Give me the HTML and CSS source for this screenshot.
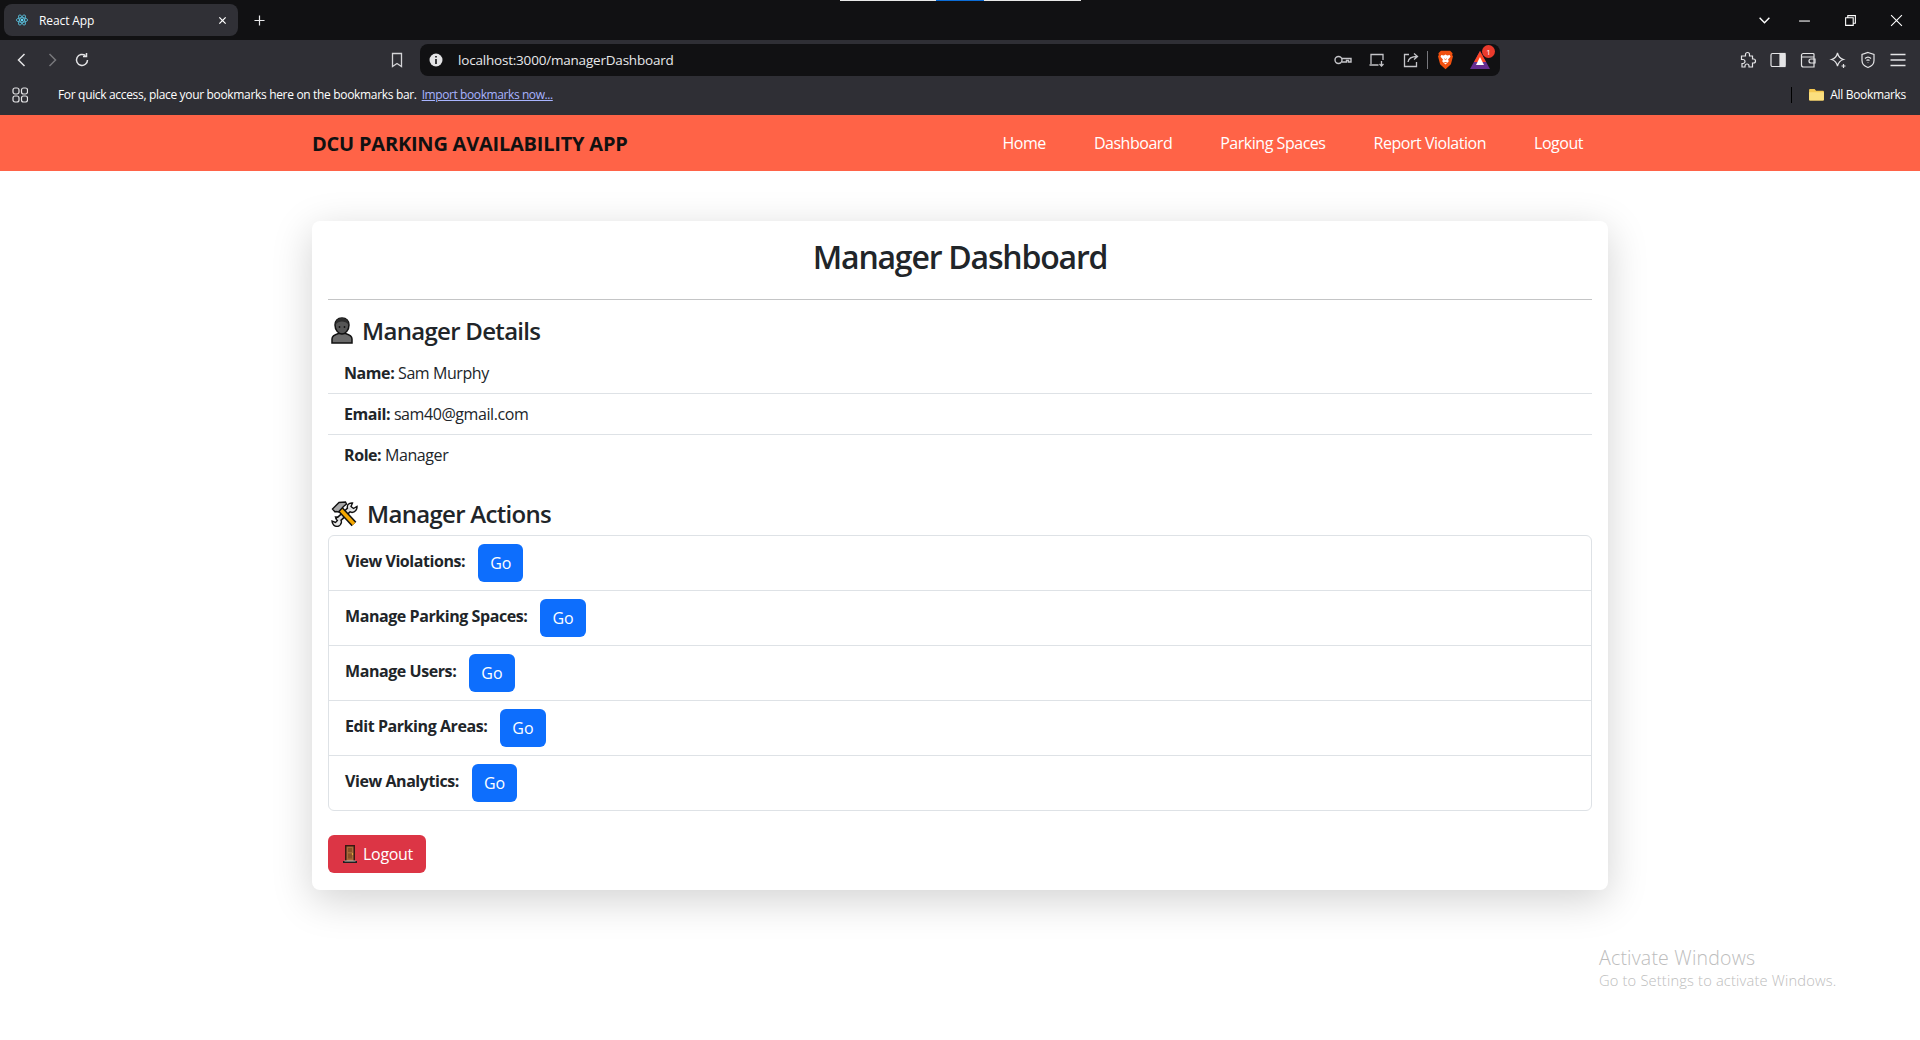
FILE: index.html
```html
<!DOCTYPE html>
<html lang="en">
<head>
    <meta charset="UTF-8">
    <meta name="viewport" content="width=device-width, initial-scale=1.0">
    <title>React App</title>
    <link rel="stylesheet" href="styles.css">
</head>
<body>
    <!-- Browser window -->
    <div class="browser">
        <div class="tabstrip">
            <div class="share-line"><span class="share-line-on"></span></div>
            <div class="tab">
                <svg class="favicon" viewBox="0 0 16 16" fill="none" stroke="#61dafb" stroke-width="0.8">
                    <circle cx="8" cy="8" r="1.4" fill="#61dafb" stroke="none"/>
                    <ellipse cx="8" cy="8" rx="6.5" ry="2.6"/>
                    <ellipse cx="8" cy="8" rx="6.5" ry="2.6" transform="rotate(60 8 8)"/>
                    <ellipse cx="8" cy="8" rx="6.5" ry="2.6" transform="rotate(120 8 8)"/>
                </svg>
                <span class="tab-title">React App</span>
                <svg class="tab-close" viewBox="0 0 10 10" stroke="#fff" stroke-width="1.4"><path d="M1.5 1.5l7 7M8.5 1.5l-7 7"/></svg>
            </div>
            <svg class="new-tab" viewBox="0 0 12 12" stroke="#e8e8ea" stroke-width="1.3"><path d="M6 .5v11M.5 6h11"/></svg>
            <div class="window-controls">
                <svg class="tab-search" viewBox="0 0 12 12" fill="none" stroke="#fff" stroke-width="1.3"><path d="M1.5 3.5L6 8l4.5-4.5"/></svg>
                <svg viewBox="0 0 12 12" fill="none" stroke="#fff"><path d="M1 6.5h10"/></svg>
                <svg viewBox="0 0 12 12" fill="none" stroke="#fff"><path d="M1.5 3.5h7v7h-7zM3.5 3.5v-2h7v7h-2"/></svg>
                <svg viewBox="0 0 12 12" fill="none" stroke="#fff"><path d="M1 1l10 10M11 1L1 11"/></svg>
            </div>
        </div>

        <div class="toolbar">
            <div class="tool-group">
                <svg class="tool" viewBox="0 0 18 18" fill="none" stroke="#e4e4e6" stroke-width="1.5"><path d="M11.5 3L5.5 9l6 6"/></svg>
                <svg class="tool" viewBox="0 0 18 18" fill="none" stroke="#77777c" stroke-width="1.5"><path d="M6.5 3l6 6-6 6"/></svg>
                <svg class="tool" viewBox="0 0 18 18" fill="none" stroke="#e4e4e6" stroke-width="1.5"><path d="M14.5 9a5.5 5.5 0 1 1-2-4.3"/><path d="M13.5 2v3.6H10"/></svg>
            </div>
            <svg class="tool bookmark" viewBox="0 0 18 18" fill="none" stroke="#d4d4d7" stroke-width="1.3"><path d="M4.5 2.5h9v13L9 12.5l-4.5 3z"/></svg>
            <div class="address">
                <svg class="info" viewBox="0 0 14 14"><circle cx="7" cy="7" r="6.5" fill="#e4e4e6"/><path d="M7 3v1.6M7 6v5" stroke="#111113" stroke-width="1.6"/></svg>
                <span class="url">localhost:3000/managerDashboard</span>
                <div class="address-icons">
                    <svg class="addr-icon" viewBox="0 0 18 18" fill="none" stroke="#c4c4c8" stroke-width="1.4"><circle cx="4.5" cy="9" r="3.5"/><path d="M8 7.5h9v3.5h-2.5V9.500h-2V11H8"/></svg>
                    <svg class="addr-icon" viewBox="0 0 18 18" fill="none" stroke="#c4c4c8" stroke-width="1.3"><path d="M3 13V3.500h12V9M1.500 14h9M13.500 10v5M11.500 13l2 2 2-2"/></svg>
                    <svg class="addr-icon" viewBox="0 0 18 18" fill="none" stroke="#c4c4c8" stroke-width="1.3"><path d="M7 3.500H2.500v12h12V11M6 11c.5-3.500 3-5.500 9-5.500M12 2.500l3.500 3-3.500 3"/></svg>
                    <span class="addr-sep"></span>
                    <svg class="brave" viewBox="0 0 20 24">
                        <path d="M4.500 1h11l3 3-.5 2 1 1.500-2.500 9.500-6.500 6-6.500-6L1 7.500 2 6l-.5-2z" fill="#f1500f"/>
                        <path d="M5 6l3 .5 2-1 2 1 3-.5 1 2-3 3.500 1 2-4 4-4-4 1-2-3-3.500z" fill="#fff"/>
                        <path d="M8.500 10.500l1.500 1 1.500-1M8.500 15h3" stroke="#f1500f" fill="none"/>
                    </svg>
                    <div class="rewards">
                        <svg viewBox="0 0 20 18">
                            <path d="M10 0l10 18H0z" fill="#662d91"/>
                            <path d="M10 0l6 11H4z" fill="#ff4724"/>
                            <path d="M10 6l4 8H6z" fill="#fff"/>
                        </svg>
                        <span class="badge">1</span>
                    </div>
                </div>
            </div>
            <div class="tool-group tool-right">
                <svg class="tool" viewBox="0 0 18 18" fill="none" stroke="#e4e4e6" stroke-width="1.2"><path d="M6.500 3.500a2 2 0 0 1 4 0V5h3v3h1a2 2 0 0 1 0 4h-1v4H10v-1a2 2 0 0 0-4 0v1H3v-3.500h1a2 2 0 0 0 0-4H2.500V5h4z"/></svg>
                <svg class="tool" viewBox="0 0 18 18" fill="none" stroke="#e4e4e6" stroke-width="1.2"><rect x="2" y="2.500" width="14" height="13" rx="1.500"/><rect x="11" y="2.500" width="5" height="13" fill="#e4e4e6"/></svg>
                <svg class="tool" viewBox="0 0 18 18" fill="none" stroke="#e4e4e6" stroke-width="1.2"><path d="M15 6V3.500a1 1 0 0 0-1-1H4a2 2 0 0 0-1.500 1.500v10a2 2 0 0 0 2 2H15V6H3"/><path d="M16 8h-4a1.500 1.500 0 0 0 0 4h4z"/></svg>
                <svg class="tool" viewBox="0 0 18 18" fill="none" stroke="#e4e4e6" stroke-width="1.2"><path d="M8.500 2c.8 3.500 2.500 5.500 6 6.500-3.500 1-5.200 3-6 6.500-.8-3.500-2.500-5.500-6-6.500 3.500-1 5.200-3 6-6.500z"/><path d="M14.500 13v4M12.500 15h4"/></svg>
                <svg class="tool" viewBox="0 0 18 18" fill="none" stroke="#e4e4e6" stroke-width="1.2"><path d="M9 1.500l6 2v6c0 3.500-3 6-6 7-3-1-6-3.500-6-7v-6z"/><path d="M6 7.500a4.500 4.500 0 0 1 6 0M7.500 9.500a2.200 2.200 0 0 1 3 0M9 11.500v.5"/></svg>
                <svg class="tool" viewBox="0 0 18 18" fill="none" stroke="#e4e4e6" stroke-width="1.4"><path d="M1.500 3.500h15M1.500 9h15M1.500 14.500h15"/></svg>
            </div>
        </div>

        <div class="bookmarks">
            <svg class="apps" viewBox="0 0 16 16" fill="none" stroke="#e4e4e6" stroke-width="1.2"><rect x="1" y="1" width="6" height="6" rx="2"/><rect x="9.500" y="1" width="6" height="6" rx="2"/><rect x="1" y="9" width="6" height="6" rx="2"/><rect x="9.500" y="9" width="6" height="6" rx="2"/></svg>
            <span class="bookmark-hint">For quick access, place your bookmarks here on the bookmarks bar.</span>
            <a class="bookmark-link" href="#">Import bookmarks now...</a>
            <span class="bookmark-sep"></span>
            <svg class="folder" viewBox="0 0 16 14"><path d="M0 2a1 1 0 0 1 1-1h5l1.500 2H15a1 1 0 0 1 1 1v8.500a1 1 0 0 1-1 1H1a1 1 0 0 1-1-1z" fill="#f5c850"/><path d="M0 4.500h16V12.500a1 1 0 0 1-1 1H1a1 1 0 0 1-1-1z" fill="#fbdf7e"/></svg>
            <span class="all-bookmarks">All Bookmarks</span>
        </div>
    </div>

    <!-- App navbar -->
    <nav class="navbar">
        <div class="navbar-inner">
            <a class="brand" href="#">DCU PARKING AVAILABILITY APP</a>
            <div class="nav-links">
                <a href="#">Home</a>
                <a href="#">Dashboard</a>
                <a href="#">Parking Spaces</a>
                <a href="#">Report Violation</a>
                <a href="#">Logout</a>
            </div>
        </div>
    </nav>

    <main class="card">
        <h2 class="card-title">Manager Dashboard</h2>
        <hr class="divider">

        <h4 class="section-title">
            <svg class="section-icon person" viewBox="0 0 22 27">
                <path d="M1 26v-4c0-3 3-4.500 6.500-5.500h7c3.500 1 6.500 2.500 6.500 5.500v4z" fill="#6b6b6b" stroke="#111" stroke-width="1.5"/>
                <path d="M11 1c4.500 0 7 3 7 7 0 5-3.500 9-7 9s-7-4-7-9c0-4 2.500-7 7-7z" fill="#555" stroke="#111" stroke-width="1.5"/>
                <path d="M4.500 8C6 5 8.500 4.500 11 4.500S16 5 17.500 8C18 3.500 15 1 11 1S4 3.500 4.500 8z" fill="#2c2c2c"/>
                <circle cx="8.500" cy="10" r=".9" fill="#111"/><circle cx="13.500" cy="10" r=".9" fill="#111"/>
            </svg>
            <span>Manager Details</span>
        </h4>
        <ul class="details">
            <li><b>Name:</b> Sam Murphy</li>
            <li><b>Email:</b> sam40@gmail.com</li>
            <li><b>Role:</b> Manager</li>
        </ul>

        <h4 class="section-title actions-title">
            <svg class="section-icon tools" viewBox="0 0 27 26">
                <!-- wrench -->
                <path d="M21 6L6 20" stroke="#111" stroke-width="6" fill="none"/>
                <path d="M17 3.500a5.500 5.500 0 0 0 4 8 5.500 5.500 0 0 0 5-6l-3.500 2-2.500-2 1.500-3.500a5.500 5.500 0 0 0-4.500 1.500z" fill="#e8e8e8" stroke="#111" stroke-width="1.4"/>
                <path d="M10.500 21a5.500 5.500 0 0 1-4 4.500 5.500 5.500 0 0 1-5.500-5.500l3.500 1.500 2-2-2-3.500a5.500 5.500 0 0 1 6 5z" fill="#e8e8e8" stroke="#111" stroke-width="1.4"/>
                <path d="M20 7L7 19" stroke="#ddd" stroke-width="3" fill="none"/>
                <!-- hammer -->
                <path d="M9 8L23 23" stroke="#111" stroke-width="6.5" fill="none"/>
                <path d="M9 8L23 23" stroke="#f5a800" stroke-width="3.500" fill="none"/>
                <path d="M1.500 8L8 1.500l6.500-.5 1 2-3 2.500-5 5.500-2.500-.5-1 .5z" fill="#a8a8a8" stroke="#111" stroke-width="1.4"/>
            </svg>
            <span>Manager Actions</span>
        </h4>
        <ul class="actions">
            <li><b>View Violations:</b><button class="btn btn-primary">Go</button></li>
            <li><b>Manage Parking Spaces:</b><button class="btn btn-primary">Go</button></li>
            <li><b>Manage Users:</b><button class="btn btn-primary">Go</button></li>
            <li><b>Edit Parking Areas:</b><button class="btn btn-primary">Go</button></li>
            <li><b>View Analytics:</b><button class="btn btn-primary">Go</button></li>
        </ul>

        <button class="btn btn-danger logout">
            <svg class="door" viewBox="0 0 14 18">
                <path d="M2 0h10v16H2z" fill="#3a1712"/>
                <path d="M3.500 1.500h7V16h-7z" fill="#a9693a"/>
                <path d="M5 3h4v4H5zM5 8.500h4v5H5z" fill="#8a5128"/>
                <circle cx="9.500" cy="9" r=".7" fill="#ffc83d"/>
                <path d="M0 16h14v2H0z" fill="#1f1f1f"/><path d="M1.500 15.500h11v1h-11z" fill="#bbb"/>
            </svg>
            Logout
        </button>
    </main>

    <!-- OS watermark -->
    <div class="watermark">
        <div class="watermark-title">Activate Windows</div>
        <div class="watermark-sub">Go to Settings to activate Windows.</div>
    </div>
</body>
</html>
```

FILE: styles.css
```css
* {
    box-sizing: border-box;
}
html, body {
    height: 100%;
}
body {
    margin: 0;
    background-color: white;
    color: #212529;
    font-family: "Open Sans", "Noto Sans", sans-serif;
    font-size: 16px;
    overflow: hidden;
}
a {
    text-decoration: none;
}

/* browser chrome */
.browser {
    background-color: #2f2f35;
    color: white;
    height: 115px;
}
.tabstrip {
    position: relative;
    display: flex;
    align-items: center;
    height: 40px;
    background-color: #111113;
    padding: 4px 0 4px 4px;
}
.share-line {
    position: absolute;
    top: 0;
    left: 840px;
    width: 241px;
    height: 1px;
    background-color: #e8e8e8;
}
.share-line-on {
    display: block;
    margin-left: 96px;
    width: 48px;
    height: 1px;
    background-color: #0b6cd6;
}
.tab {
    display: flex;
    align-items: center;
    width: 234px;
    height: 32px;
    background-color: #303036;
    border-radius: 8px;
    padding: 0 10px 0 11px;
}
.favicon {
    width: 14px;
    height: 14px;
}
.tab-title {
    margin-left: 10px;
    font-size: 12px;
    letter-spacing: -0.1px;
    flex: 1;
}
.tab-close {
    width: 9px;
    height: 9px;
    margin-right: 1px;
}
.new-tab {
    width: 11px;
    height: 11px;
    margin-left: 16px;
}
.window-controls {
    margin-left: auto;
    display: flex;
    align-items: center;
    gap: 33px;
    padding-right: 17px;
}
.window-controls svg {
    width: 13px;
    height: 13px;
}
.window-controls .tab-search {
    margin-right: -6px;
}
.toolbar {
    display: flex;
    align-items: center;
    height: 40px;
}
.tool-group {
    display: flex;
    padding-left: 7px;
}
.tool {
    width: 30px;
    height: 18px;
}
.bookmark {
    margin-left: 285px;
    margin-right: 8px;
}
.address {
    display: flex;
    align-items: center;
    width: 1080px;
    height: 32px;
    background-color: #111113;
    border-radius: 8px;
    padding: 0 8px 0 9px;
}
.info {
    width: 14px;
    height: 14px;
}
.url {
    margin-left: 15px;
    font-size: 13.5px;
    color: #e8e8ea;
    letter-spacing: -0.2px;
}
.address-icons {
    margin-left: auto;
    display: flex;
    align-items: center;
}
.addr-icon {
    width: 18px;
    height: 18px;
    margin-right: 16px;
}
.addr-sep {
    width: 1px;
    height: 18px;
    background-color: #77777c;
    margin-left: -9px;
    margin-right: 9px;
}
.brave {
    width: 17px;
    height: 20px;
    margin-right: 16px;
}
.rewards {
    position: relative;
    width: 20px;
    height: 18px;
    margin-right: 2px;
}
.rewards svg {
    display: block;
    width: 20px;
    height: 18px;
}
.badge {
    position: absolute;
    top: -6px;
    right: -5px;
    width: 13px;
    height: 13px;
    border-radius: 50%;
    background-color: #ea3a2c;
    color: white;
    font-size: 8px;
    line-height: 13px;
    text-align: center;
}
.tool-right {
    margin-left: auto;
    padding: 0 7px 0 0;
}
.bookmarks {
    display: flex;
    align-items: center;
    height: 35px;
    padding: 0 14px 6px 12px;
    font-size: 12px;
}
.apps {
    width: 16px;
    height: 16px;
}
.bookmark-hint {
    margin-left: 30px;
    letter-spacing: -0.33px;
}
.bookmark-link {
    margin-left: 5px;
    color: #a8b4ff;
    text-decoration: underline;
    letter-spacing: -0.41px;
}
.bookmark-sep {
    margin-left: auto;
    width: 1px;
    height: 16px;
    background-color: #000;
}
.folder {
    width: 15px;
    height: 13px;
    margin-left: 17px;
}
.all-bookmarks {
    margin-left: 6px;
    letter-spacing: -0.33px;
}

/* navbar */
.navbar {
    background-color: tomato;
    height: 56px;
}
.navbar-inner {
    width: 1296px;
    height: 100%;
    margin: 0 auto;
    display: flex;
    align-items: center;
    justify-content: space-between;
}
.brand {
    color: #111;
    font-size: 20px;
    font-weight: 700;
    letter-spacing: -0.22px;
}
.nav-links {
    display: flex;
    gap: 48px;
    padding-right: 25px;
}
.nav-links a {
    color: white;
    letter-spacing: -0.47px;
}

/* card */
.card {
    width: 1296px;
    height: 669px;
    margin: 50px auto 0;
    padding: 16px;
    background-color: white;
    border-radius: 8px;
    box-shadow: 0 10px 40px rgba(0, 0, 0, 0.18);
}
.card-title {
    margin: 0;
    height: 43px;
    line-height: 40px;
    text-align: center;
    font-size: 32px;
    font-weight: 600;
    letter-spacing: -1.2px;
}
.divider {
    margin: 19px 0 16px;
    border: none;
    border-top: 1px solid #c4c5c6;
}
.section-title {
    display: flex;
    align-items: center;
    margin: 0;
    height: 29px;
    font-size: 24px;
    font-weight: 600;
    letter-spacing: -0.7px;
}
.section-icon {
    display: block;
}
.person {
    width: 22px;
    height: 27px;
    margin: 0 9px 0 3px;
}
.tools {
    width: 27px;
    height: 26px;
    margin: 0 9px 0 3px;
}
.actions-title {
    margin-top: 23px;
}
.details {
    list-style: none;
    margin: 8px 0 0;
    padding: 0;
}
.details li {
    height: 41px;
    padding: 8px 16px;
    line-height: 24px;
    letter-spacing: -0.42px;
    border-bottom: 1px solid #dee2e6;
}
.details li:last-child {
    border-bottom: none;
}
.actions {
    list-style: none;
    margin: 7px 0 0;
    padding: 0;
    border: 1px solid #dee2e6;
    border-radius: 6px;
}
.actions li {
    display: flex;
    align-items: center;
    height: 55px;
    padding: 8px 16px;
    border-bottom: 1px solid #dee2e6;
}
.actions li:last-child {
    border-bottom: none;
    height: 54px;
}
.actions b {
    position: relative;
    top: -2px;
    letter-spacing: -0.43px;
    margin-right: 13px;
}
.btn {
    height: 38px;
    padding: 0 12px;
    border: none;
    border-radius: 6px;
    color: white;
    font-family: inherit;
    font-size: 16px;
    letter-spacing: 0;
    cursor: pointer;
}
.btn-primary {
    background-color: #0d6efd;
}
.btn-danger {
    background-color: #dc3545;
}
.logout {
    display: flex;
    align-items: center;
    gap: 6px;
    margin-top: 24px;
    width: 98px;
    padding-left: 15px;
    letter-spacing: -0.3px;
}
.door {
    width: 14px;
    height: 18px;
}

/* windows watermark */
.watermark {
    position: absolute;
    left: 1599px;
    top: 945px;
    color: #bdbdbd;
    font-weight: 300;
}
.watermark-title {
    font-size: 19.5px;
    line-height: 26px;
    letter-spacing: 0.2px;
}
.watermark-sub {
    font-size: 14.67px;
    line-height: 18px;
    letter-spacing: 0.18px;
}
```
